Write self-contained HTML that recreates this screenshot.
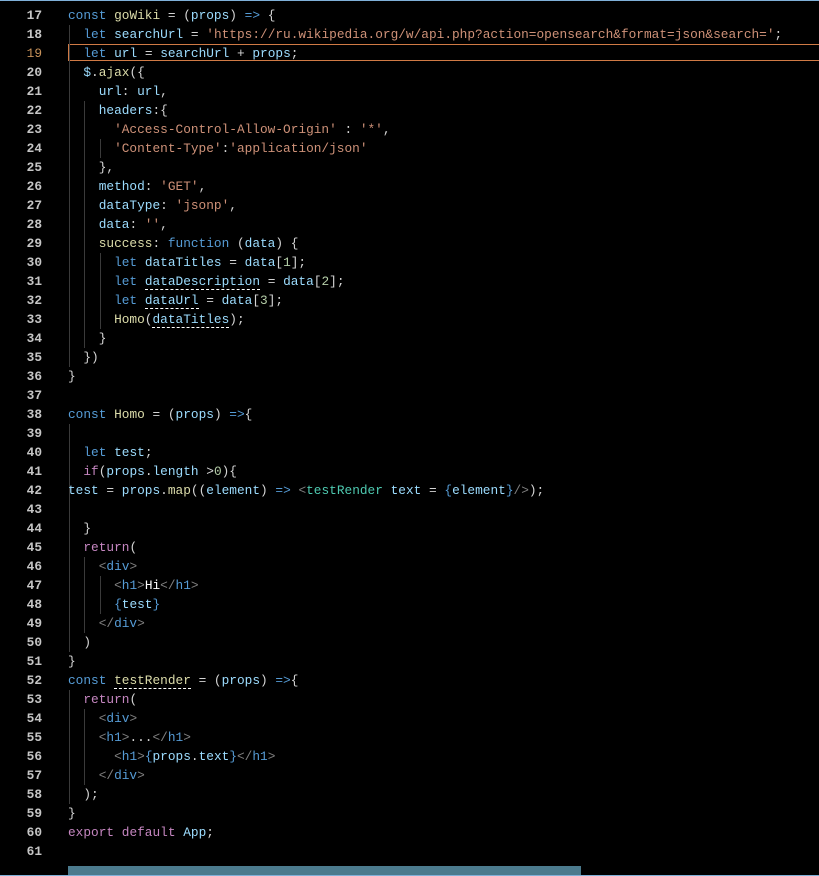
<!DOCTYPE html>
<html><head><meta charset="utf-8"><style>
html,body{margin:0;padding:0;background:#000;width:819px;height:876px;overflow:hidden;position:relative}
.top{position:absolute;left:0;top:0;width:819px;height:1px;background:#7fb0d8}
.bot{position:absolute;left:0;top:875px;width:819px;height:1px;background:#7fb0d8}
.sb{position:absolute;left:68px;top:866px;width:513px;height:9px;background:#4b7a8d}
.cur{position:absolute;left:68px;top:44px;width:760px;height:17px;border:1px solid #d07a45;border-right:none;box-sizing:border-box}
.code{position:absolute;left:0;top:6px;font-family:"Liberation Mono",monospace;font-size:12.8px;line-height:19px;color:#d4d4d4}
.l{height:19px;white-space:pre;position:relative}
.n{display:inline-block;width:42px;text-align:right;color:#c6c6c6;font-weight:bold;margin-right:26px}
.n.a{color:#c8925a;font-weight:normal}
.k{color:#569cd6}.v{color:#9cdcfe}.s{color:#ce9178}.f{color:#dcdcaa}.c{color:#c586c0}.g{color:#808080}.t{color:#4ec9b0}.w{color:#fff}.nm{color:#b5cea8}
.u{border-bottom:1px dashed #fff}
.ig{position:absolute;width:1px;background:#3a3a3a}
</style></head><body>
<div class="top"></div>
<div class="cur"></div>
<div class="ig" style="left:69px;top:25px;height:342px"></div>
<div class="ig" style="left:84px;top:101px;height:247px"></div>
<div class="ig" style="left:100px;top:139px;height:19px"></div>
<div class="ig" style="left:100px;top:253px;height:76px"></div>
<div class="ig" style="left:69px;top:424px;height:228px"></div>
<div class="ig" style="left:84px;top:557px;height:76px"></div>
<div class="ig" style="left:100px;top:576px;height:38px"></div>
<div class="ig" style="left:69px;top:690px;height:114px"></div>
<div class="ig" style="left:84px;top:709px;height:76px"></div>
<div class="code">
<div class="l"><span class="n">17</span><span class="k">const</span> <span class="f">goWiki</span> = (<span class="v">props</span>) <span class="k">=&gt;</span> {</div>
<div class="l"><span class="n">18</span>  <span class="k">let</span> <span class="v">searchUrl</span> = <span class="s">'https://ru.wikipedia.org/w/api.php?action=opensearch&amp;format=json&amp;search='</span>;</div>
<div class="l"><span class="n a">19</span>  <span class="k">let</span> <span class="v">url</span> = <span class="v">searchUrl</span> + <span class="v">props</span>;</div>
<div class="l"><span class="n">20</span>  <span class="v">$</span>.<span class="f">ajax</span>({</div>
<div class="l"><span class="n">21</span>    <span class="v">url</span>: <span class="v">url</span>,</div>
<div class="l"><span class="n">22</span>    <span class="v">headers</span>:{</div>
<div class="l"><span class="n">23</span>      <span class="s">'Access-Control-Allow-Origin'</span> : <span class="s">'*'</span>,</div>
<div class="l"><span class="n">24</span>      <span class="s">'Content-Type'</span>:<span class="s">'application/json'</span></div>
<div class="l"><span class="n">25</span>    },</div>
<div class="l"><span class="n">26</span>    <span class="v">method</span>: <span class="s">'GET'</span>,</div>
<div class="l"><span class="n">27</span>    <span class="v">dataType</span>: <span class="s">'jsonp'</span>,</div>
<div class="l"><span class="n">28</span>    <span class="v">data</span>: <span class="s">''</span>,</div>
<div class="l"><span class="n">29</span>    <span class="f">success</span>: <span class="k">function</span> (<span class="v">data</span>) {</div>
<div class="l"><span class="n">30</span>      <span class="k">let</span> <span class="v">dataTitles</span> = <span class="v">data</span>[<span class="nm">1</span>];</div>
<div class="l"><span class="n">31</span>      <span class="k">let</span> <span class="v u">dataDescription</span> = <span class="v">data</span>[<span class="nm">2</span>];</div>
<div class="l"><span class="n">32</span>      <span class="k">let</span> <span class="v u">dataUrl</span> = <span class="v">data</span>[<span class="nm">3</span>];</div>
<div class="l"><span class="n">33</span>      <span class="f">Homo</span>(<span class="v u">dataTitles</span>);</div>
<div class="l"><span class="n">34</span>    }</div>
<div class="l"><span class="n">35</span>  })</div>
<div class="l"><span class="n">36</span>}</div>
<div class="l"><span class="n">37</span></div>
<div class="l"><span class="n">38</span><span class="k">const</span> <span class="f">Homo</span> = (<span class="v">props</span>) <span class="k">=&gt;</span>{</div>
<div class="l"><span class="n">39</span></div>
<div class="l"><span class="n">40</span>  <span class="k">let</span> <span class="v">test</span>;</div>
<div class="l"><span class="n">41</span>  <span class="c">if</span>(<span class="v">props</span>.<span class="v">length</span> &gt;<span class="nm">0</span>){</div>
<div class="l"><span class="n">42</span><span class="v">test</span> = <span class="v">props</span>.<span class="f">map</span>((<span class="v">element</span>) <span class="k">=&gt;</span> <span class="g">&lt;</span><span class="t">testRender</span> <span class="v">text</span> = <span class="k">{</span><span class="v">element</span><span class="k">}</span><span class="g">/&gt;</span>);</div>
<div class="l"><span class="n">43</span></div>
<div class="l"><span class="n">44</span>  }</div>
<div class="l"><span class="n">45</span>  <span class="c">return</span>(</div>
<div class="l"><span class="n">46</span>    <span class="g">&lt;</span><span class="k">div</span><span class="g">&gt;</span></div>
<div class="l"><span class="n">47</span>      <span class="g">&lt;</span><span class="k">h1</span><span class="g">&gt;</span><span class="w">Hi</span><span class="g">&lt;/</span><span class="k">h1</span><span class="g">&gt;</span></div>
<div class="l"><span class="n">48</span>      <span class="k">{</span><span class="v">test</span><span class="k">}</span></div>
<div class="l"><span class="n">49</span>    <span class="g">&lt;/</span><span class="k">div</span><span class="g">&gt;</span></div>
<div class="l"><span class="n">50</span>  )</div>
<div class="l"><span class="n">51</span>}</div>
<div class="l"><span class="n">52</span><span class="k">const</span> <span class="f u">testRender</span> = (<span class="v">props</span>) <span class="k">=&gt;</span>{</div>
<div class="l"><span class="n">53</span>  <span class="c">return</span>(</div>
<div class="l"><span class="n">54</span>    <span class="g">&lt;</span><span class="k">div</span><span class="g">&gt;</span></div>
<div class="l"><span class="n">55</span>    <span class="g">&lt;</span><span class="k">h1</span><span class="g">&gt;</span>...<span class="g">&lt;/</span><span class="k">h1</span><span class="g">&gt;</span></div>
<div class="l"><span class="n">56</span>      <span class="g">&lt;</span><span class="k">h1</span><span class="g">&gt;</span><span class="k">{</span><span class="v">props</span>.<span class="v">text</span><span class="k">}</span><span class="g">&lt;/</span><span class="k">h1</span><span class="g">&gt;</span></div>
<div class="l"><span class="n">57</span>    <span class="g">&lt;/</span><span class="k">div</span><span class="g">&gt;</span></div>
<div class="l"><span class="n">58</span>  );</div>
<div class="l"><span class="n">59</span>}</div>
<div class="l"><span class="n">60</span><span class="c">export</span> <span class="c">default</span> <span class="v">App</span>;</div>
<div class="l"><span class="n">61</span></div>
</div>
<div class="sb"></div>
<div class="bot"></div>
</body></html>
